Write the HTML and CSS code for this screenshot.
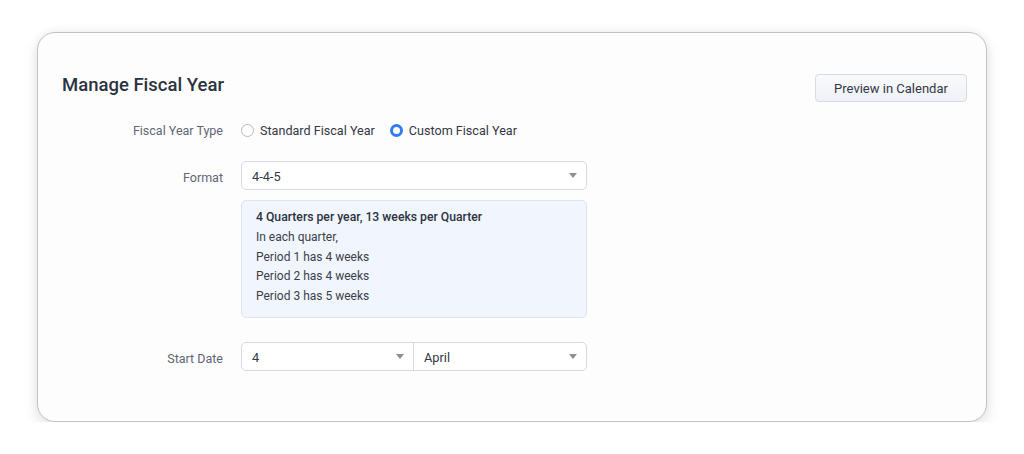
FILE: index.html
```html
<!DOCTYPE html>
<html>
<head>
<meta charset="utf-8">
<link rel="stylesheet" href="styles.css">
</head>
<body>
<div class="card">
  <div class="header">
    <h1 class="title">Manage Fiscal Year</h1>
    <button class="btn">Preview in Calendar</button>
  </div>
  <div class="row row-type">
    <div class="label">Fiscal Year Type</div>
    <div class="radios">
      <label class="radio"><span class="dot"></span>Standard Fiscal Year</label>
      <label class="radio checked"><span class="dot"></span>Custom Fiscal Year</label>
    </div>
  </div>
  <div class="row row-format">
    <div class="label label-field">Format</div>
    <div class="control">
      <div class="select">
        <span class="val">4-4-5</span>
        <span class="caret"></span>
      </div>
      <div class="info">
        <div class="info-title">4 Quarters per year, 13 weeks per Quarter</div>
        <div>In each quarter,</div>
        <div>Period 1 has 4 weeks</div>
        <div>Period 2 has 4 weeks</div>
        <div>Period 3 has 5 weeks</div>
      </div>
    </div>
  </div>
  <div class="row row-date">
    <div class="label label-field">Start Date</div>
    <div class="control">
      <div class="split">
        <div class="part part-day"><span class="val">4</span><span class="caret"></span></div>
        <div class="part part-month"><span class="val">April</span><span class="caret"></span></div>
      </div>
    </div>
  </div>
</div>
</body>
</html>
```
FILE: styles.css
```css
* { box-sizing: border-box; }
html, body { margin: 0; padding: 0; background: #ffffff; }
body {
  font-family: Roboto, "Noto Sans", sans-serif;
  color: #333844;
  font-size: 13px;
}
.card {
  margin: 32px 37px 0;
  width: 950px;
  height: 390px;
  background: #fdfdfd;
  border: 1px solid #c2c2c2;
  border-radius: 18px;
  box-shadow: 0 6px 16px rgba(0,0,0,0.10), 0 0 10px rgba(0,0,0,0.05);
  padding: 40px 19px 0 24px;
}
.header {
  display: flex;
  justify-content: space-between;
  align-items: flex-start;
}
.title {
  margin: 0;
  font-size: 18.5px;
  line-height: 24px;
  font-weight: 500;
  color: #2c3340;
}
.btn {
  margin-top: 1px;
  width: 152px;
  height: 28px;
  font-family: inherit;
  font-size: 13px;
  color: #333844;
  background: linear-gradient(#f9fafc, #eef1f6);
  border: 1px solid #d5dae3;
  border-radius: 4px;
  padding: 0;
}
.row { display: flex; }
.label {
  width: 161px;
  margin-right: 18px;
  text-align: right;
  color: #5f6673;
  font-size: 12.5px;
}
.row-type { margin-top: 17px; align-items: center; height: 22px; }
.radios { display: flex; gap: 15px; }
.radio { display: flex; align-items: center; gap: 6px; font-size: 12.6px; color: #333844; }
.dot {
  width: 13px; height: 13px; border-radius: 50%;
  border: 1px solid #b3b8c2; background: #fff;
}
.checked .dot { border: 3.5px solid #2f7cf6; }
.row-format { margin-top: 20px; align-items: flex-start; }
.label-field { line-height: 29px; padding-top: 2px; }
.control { width: 346px; }
.select, .split {
  height: 29px;
  border: 1px solid #d6dae1;
  border-radius: 5px;
  background: #fff;
}
.select, .part {
  display: flex;
  align-items: center;
  justify-content: space-between;
  padding: 0 9px 0 10px;
  font-size: 12.75px;
  color: #333844;
}
.val { padding-top: 1px; }
.caret {
  width: 0; height: 0;
  border-left: 4.5px solid transparent;
  border-right: 4.5px solid transparent;
  border-top: 5px solid #8a8f98;
}
.info {
  margin-top: 10px;
  height: 118px;
  background: #f1f5fd;
  border: 1px solid #dde4f0;
  border-radius: 5px;
  padding: 7px 14px 0;
  font-size: 12px;
  line-height: 19.75px;
  color: #3a3f4a;
}
.info-title { font-weight: 500; color: #2c3340; font-size: 12.2px; }
.row-date { margin-top: 24px; align-items: flex-start; }
.split { display: flex; }
.part { height: 100%; }
.part-day { width: 172px; border-right: 1px solid #d6dae1; }
.part-month { flex: 1; }
```
